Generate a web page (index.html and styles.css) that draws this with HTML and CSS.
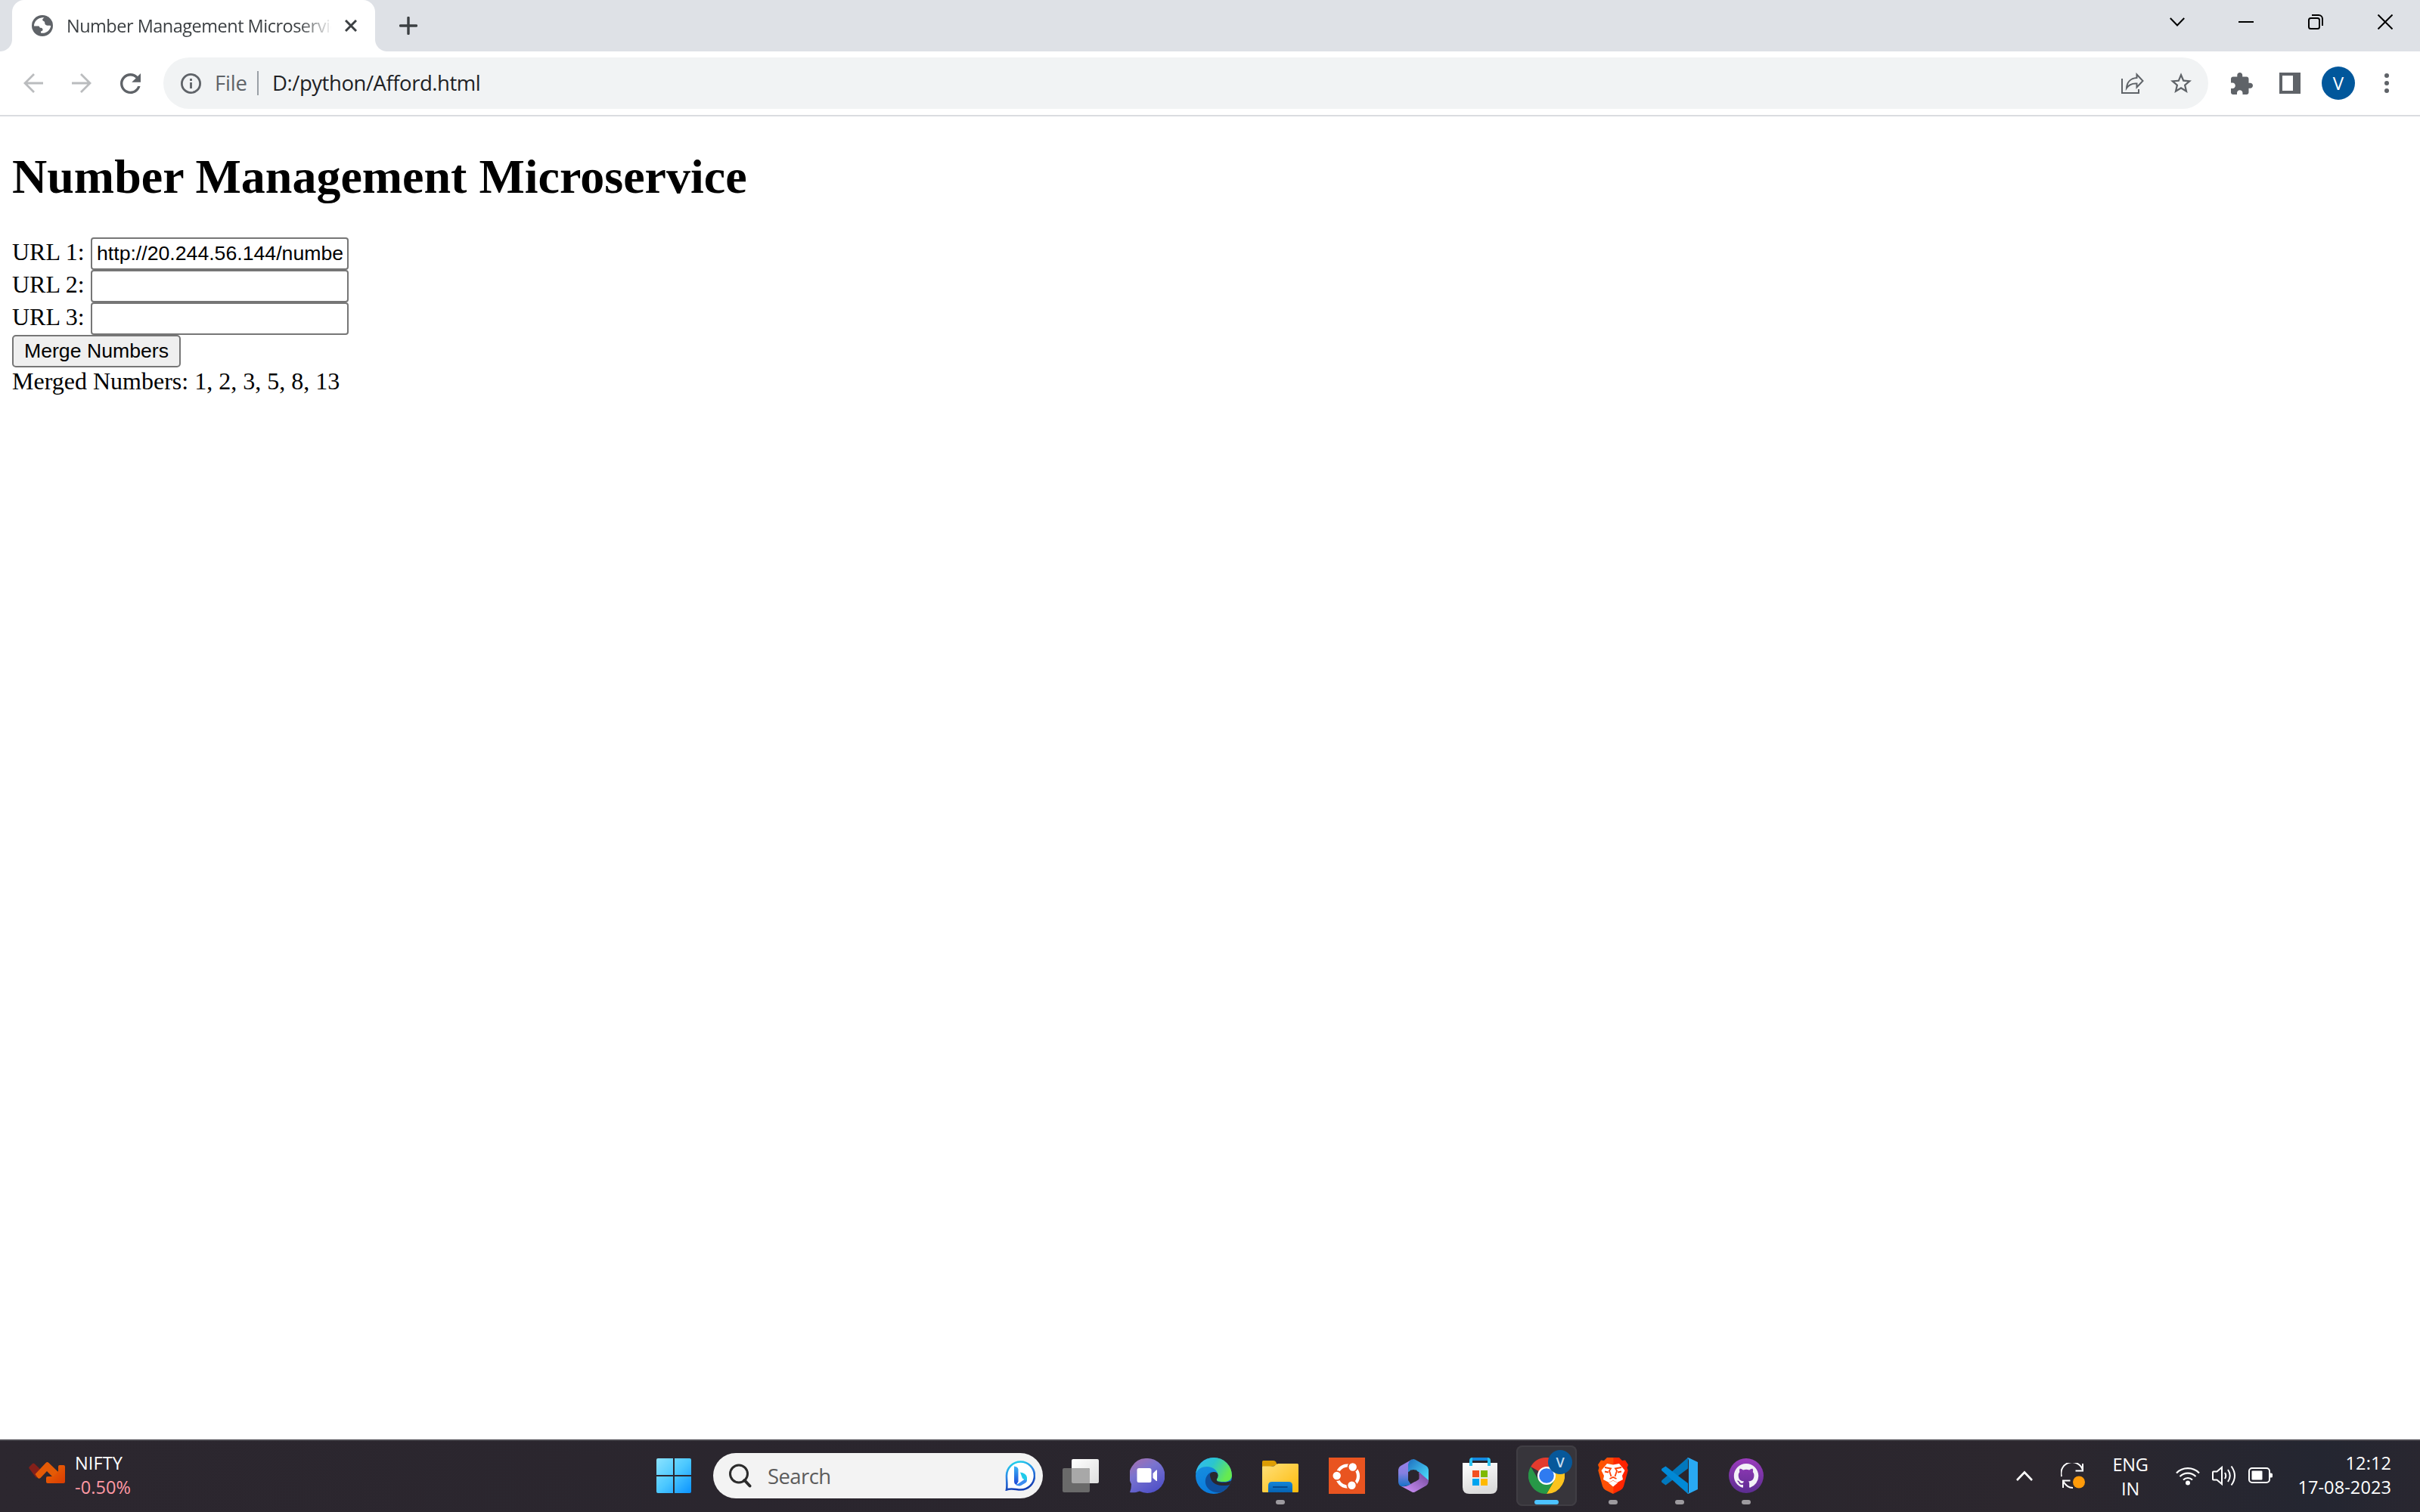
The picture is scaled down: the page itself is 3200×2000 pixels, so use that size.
FILE: index.html
```html
<!DOCTYPE html>
<html lang="en">
<head>
<meta charset="utf-8">
<title>Number Management Microservice</title>
<link rel="stylesheet" href="styles.css">
</head>
<body>
<div class="screen">
  <header class="tabstrip">
    <div class="tab">
      <svg class="favicon" width="28" height="28" viewBox="0 0 28 28"><circle cx="14" cy="14" r="14" fill="#5f6368"/><path d="M3 14.500c0-4.500 2.500-8 6.500-10 1.500-.8 4.500-1.500 7-1.200-1.300.9-2.500 1.700-2.300 3.200.3 1.500 3 1.200 3 3.500 0 2 1 3.500 3.300 3.800 2 .2 2.800-.6 4.700.4-.4 3.800-3.500 8-8 9.200-1.800.5-3.500.6-5.200.2 0-1.400 0-2.200 1.300-2.500 1.400-.4 1.400-1.600 1-2.800-.4-1.500-1.800-1.300-3-1.600-1.600-.4-.8-2.200-2.300-2.200z" fill="#fff"/></svg>
      <span class="tab-title">Number Management Microservice</span>
      <svg class="tab-close" width="16" height="16" viewBox="0 0 16 16"><path d="M1 1l14 14M15 1L1 15" stroke="#3c4043" stroke-width="3"/></svg>
    </div>
    <svg class="new-tab" width="24" height="24" viewBox="0 0 24 24"><path d="M12 1.500v21M1.500 12h21" stroke="#3c4043" stroke-width="3.400" stroke-linecap="round"/></svg>
    <div class="window-controls">
      <span class="win"><svg class="caret" width="20" height="12" viewBox="0 0 20 12"><path d="M.8 1L10 10.500 19.200 1" fill="none" stroke="#000" stroke-width="2"/></svg></span>
      <span class="win"><svg width="20" height="2"><rect width="20" height="2"/></svg></span>
      <span class="win"><svg width="20" height="20" viewBox="0 0 20 20" fill="none" stroke="#000" stroke-width="2"><rect x="1" y="5" width="14" height="14" rx="2.500"/><path d="M5 1h9a5 5 0 0 1 5 5v9"/></svg></span>
      <span class="win"><svg width="20" height="20" viewBox="0 0 20 20"><path d="M.5.500l19 19M19.500.500l-19 19" stroke="#000" stroke-width="2"/></svg></span>
    </div>
  </header>

  <nav class="toolbar">
    <span class="tool"><svg width="26" height="26" viewBox="0 0 26 26" fill="none" stroke="#babcbe" stroke-width="2.800"><path d="M26 13H2M14 1L2 13l12 12"/></svg></span>
    <span class="tool"><svg width="26" height="26" viewBox="0 0 26 26" fill="none" stroke="#babcbe" stroke-width="2.800"><path d="M0 13h24M12 1l12 12-12 12"/></svg></span>
    <span class="tool"><svg width="27" height="27" viewBox="4 4 16 16"><path fill="#5f6368" d="M17.650 6.350C16.200 4.900 14.210 4 12 4c-4.420 0-7.990 3.580-7.990 8s3.570 8 7.990 8c3.730 0 6.840-2.550 7.730-6h-2.080c-.82 2.330-3.040 4-5.650 4-3.310 0-6-2.690-6-6s2.690-6 6-6c1.660 0 3.140.69 4.220 1.780L13 11h7V4l-2.350 2.350z"/></svg></span>
    <div class="omnibox">
      <svg width="27" height="27" viewBox="0 0 27 27"><circle cx="13.500" cy="13.500" r="12.100" fill="none" stroke="#5f6368" stroke-width="2.800"/><path d="M12.100 12h2.800v8h-2.800zM12.100 7h2.800v2.900h-2.800z" fill="#5f6368"/></svg>
      <span class="scheme">File</span>
      <span class="rule"></span>
      <span class="url">D:/python/Afford.html</span>
      <span class="tool push"><svg width="30" height="28" viewBox="0 0 30 28" fill="none" stroke="#5f6368" stroke-width="2"><path d="M1 8v19h22v-5"/><path d="M20.500 2.500L28.500 11l-8 8.500v-5C14 14 10 16 7 20.500 7.500 13 12 7.500 20.500 7z"/></svg></span>
      <span class="tool"><svg width="28" height="28" viewBox="2 2 20 19.500"><path fill="#5f6368" d="M22 9.240l-7.190-.62L12 2 9.190 8.630 2 9.240l5.460 4.730L5.820 21 12 17.270 18.180 21l-1.630-7.030L22 9.240zM12 15.400l-3.760 2.270 1-4.280-3.320-2.880 4.380-.38L12 6.100l1.710 4.040 4.380.38-3.320 2.880 1 4.280L12 15.400z"/></svg></span>
    </div>
    <span class="tool after"><svg width="29" height="29" viewBox="2 1 21 21"><path fill="#5f6368" d="M20.500 11H19V7c0-1.100-.9-2-2-2h-4V3.500C13 2.120 11.880 1 10.500 1S8 2.120 8 3.500V5H4c-1.100 0-1.990.9-1.990 2v3.800H3.500c1.490 0 2.700 1.210 2.700 2.700s-1.210 2.700-2.700 2.700H2V20c0 1.100.9 2 2 2h3.800v-1.500c0-1.490 1.210-2.700 2.700-2.700 1.490 0 2.700 1.210 2.700 2.700V22H17c1.100 0 2-.9 2-2v-4h1.500c1.380 0 2.500-1.120 2.500-2.500S21.880 11 20.500 11z"/></svg></span>
    <span class="tool"><svg width="28" height="28"><path fill="#5f6368" fill-rule="evenodd" d="M0 0h28v28H0zM4 4v20h14V4z"/></svg></span>
    <span class="tool"><span class="avatar">V</span></span>
    <span class="tool"><svg width="6" height="26" viewBox="0 0 6 26" fill="#5f6368"><circle cx="3" cy="3" r="3"/><circle cx="3" cy="13" r="3"/><circle cx="3" cy="23" r="3"/></svg></span>
  </nav>

  <main class="page">
    <h1>Number Management Microservice</h1>
    <div class="field"><label for="u1">URL 1:</label><input id="u1" value="http://20.244.56.144/numbe"></div>
    <div class="field"><label for="u2">URL 2:</label><input id="u2"></div>
    <div class="field"><label for="u3">URL 3:</label><input id="u3"></div>
    <button class="merge">Merge Numbers</button>
    <div class="result">Merged Numbers: 1, 2, 3, 5, 8, 13</div>
  </main>

  <footer class="taskbar">
    <div class="widget">
      <svg width="48" height="28" viewBox="0 0 48 28"><defs><linearGradient id="wo" x1="0" x2="1" y2="1"><stop offset="0" stop-color="#ee6a08"/><stop offset="1" stop-color="#d83b01"/></linearGradient></defs><path d="M1 6l4-4q1-1 2.500 0L18 12l-8 9L1 9q-1.500-1.500 0-3z" fill="#84201a"/><path d="M8.500 16L22.500 1q2-2 4 0L40 14l-7 7-9-9-8.500 9q-2 1.500-3.500 0z" fill="#e45a06"/><path d="M39 12V6q0-2 2-2h5q2 0 2 2v20q0 2-2 2H25q-2 0-2-2v-5q0-2 2-2h7z" fill="url(#wo)"/></svg>
      <div class="lines"><span class="nifty">NIFTY</span><span class="loss">-0.50%</span></div>
    </div>

    <svg class="start" width="46" height="46" viewBox="0 0 46 46"><defs><linearGradient id="st" x1="0" x2="1" y2="1"><stop offset="0" stop-color="#8be3ff"/><stop offset=".5" stop-color="#4cc8ff"/><stop offset="1" stop-color="#0a93ff"/></linearGradient></defs><path fill="url(#st)" d="M2 0h20v22H0V2q0-2 2-2zM24 0h20q2 0 2 2v20H24zM0 24h22v22H2q-2 0-2-2zM24 24h22v20q0 2-2 2H24z"/></svg>
    <div class="search">
      <svg width="30" height="32" viewBox="0 0 30 32" fill="none" stroke="#2b2b2b" stroke-width="3"><circle cx="13" cy="13.500" r="11.500"/><path d="M20.500 22l7 7.500" stroke-width="4" stroke-linecap="round"/></svg>
      <span class="search-text">Search</span>
      <svg class="bing" width="40" height="40" viewBox="0 0 40 40"><defs><linearGradient id="b1" x1="0" x2=".3" y2="1"><stop offset="0" stop-color="#1be0ec"/><stop offset=".5" stop-color="#2f86e6"/><stop offset="1" stop-color="#143fb4"/></linearGradient><linearGradient id="b2" x1="0" x2="0" y2="1"><stop offset="0" stop-color="#3bb5f6"/><stop offset="1" stop-color="#1d47d8"/></linearGradient></defs><path d="M2 38.500c1-5 0-12 0-18.500a18.500 18.500 0 1 1 18.500 18.500c-6 0-12-2.500-18.500 0z" fill="#fff" stroke="url(#b1)" stroke-width="2.600"/><path d="M12 7.500l3 .8q2.500 1.200 2.500 3.500v16l-2.500 4.200q-3-1-3-4.500z" fill="url(#b2)"/><path d="M13.500 31.500q2 .3 4-1L29 22.500v3.500q0 2-2 3.500l-6 3.500q-4.500 1.500-7.500-1.500z" fill="#3c8cf0"/><path d="M20 15.500q8 1 9 7v3.500q-2 .5-6-2.500z" fill="#20cbea"/></svg>
    </div>

    <div class="apps">
      <span class="app"><svg width="48" height="48" viewBox="0 0 48 48"><defs><linearGradient id="tv" x1="0" x2="1" y2="1"><stop offset="0" stop-color="#fff"/><stop offset="1" stop-color="#dedede"/></linearGradient></defs><rect x="12" y="2" width="36" height="32" rx="2" fill="url(#tv)"/><rect y="14" width="36" height="32" rx="2" fill="#6a6a6a"/><path d="M12 14h22q2 0 2 2v18H14q-2 0-2-2z" fill="#a8a8a8"/></svg></span>
      <span class="app"><svg width="46" height="46" viewBox="0 0 46 46"><defs><linearGradient id="ch" x1=".1" x2=".7" y2="1"><stop offset="0" stop-color="#a76fae"/><stop offset=".4" stop-color="#7a74cf"/><stop offset="1" stop-color="#4f50c8"/></linearGradient></defs><path d="M23 0a23 23 0 1 1-10 43.500C8 45.500 4 45.500 0 45q2-5 2-11A23 23 0 0 1 23 0z" fill="url(#ch)"/><rect x="9.500" y="13" width="19" height="19" rx="2.500" fill="#fff"/><path d="M30.500 20l4.500-4.500h1v14.500h-1L30.500 26z" fill="#fff"/></svg></span>
      <span class="app"><svg width="48" height="48" viewBox="0 0 48 48"><defs><linearGradient id="e1" x1="0" x2="1" y2=".4"><stop offset="0" stop-color="#35b9f6"/><stop offset=".5" stop-color="#2bc5cf"/><stop offset="1" stop-color="#66ea50"/></linearGradient><linearGradient id="e2" x1="0" x2=".3" y2="1"><stop offset="0" stop-color="#1a94e0"/><stop offset="1" stop-color="#0a7bdc"/></linearGradient><clipPath id="ec"><circle cx="24" cy="24" r="24"/></clipPath></defs><g clip-path="url(#ec)"><path d="M0 0h48v48H0z" fill="url(#e2)"/><path d="M21 19C8 25 11 44 27 46l8 1 13-11-20-8z" fill="#0f4f9c"/><path d="M19 24C18 18 29 17 30 23l-2 8c4 3 12 3 20-1v5c-4 2-8 2-13 2-9 0-15-5-16-13z" fill="#2a262e"/><path d="M0 20V0h48v24c0 4-4 8-9 8-4 0-10 0-11-2-.7-2 2-3 1.800-6C29.500 17 23 12 15 12 8 12 3 15 0 21z" fill="url(#e1)"/></g></svg></span>
      <span class="app on"><svg width="48" height="48" viewBox="0 0 48 48"><defs><linearGradient id="fo" x1="0" x2="1" y2="1"><stop offset="0" stop-color="#ffe07a"/><stop offset="1" stop-color="#fdbb0b"/></linearGradient><linearGradient id="fb" x1="0" x2="0" y2="1"><stop offset="0" stop-color="#1486d8"/><stop offset="1" stop-color="#0563b4"/></linearGradient></defs><path d="M0 14V5.500q0-1.500 1.500-1.500H15q2 0 3 1.500L20 10z" fill="#dd9d04"/><path d="M0 12.500q0-1 1.500-1H14q2 0 3.500-1.500 2-2 4-2h25q1.500 0 1.500 1.500v35q0 1.500-1.500 1.500h-45Q0 46 0 44.500z" fill="url(#fo)"/><path d="M8 46V37q0-5 5-5h22q5 0 5 5v9z" fill="url(#fb)"/><path d="M14 39h19.500" stroke="#064a8c" stroke-width="2"/></svg></span>
      <span class="app"><svg width="48" height="48" viewBox="0 0 48 48"><path d="M0 0h48v48H0z" fill="#e95420"/><circle cx="25" cy="24.500" r="14" fill="none" stroke="#fff" stroke-width="4.200"/><g fill="#fff" stroke="#e95420" stroke-width="1.800"><circle cx="31.700" cy="12.500" r="6.100"/><circle cx="10.700" cy="24" r="6.100"/><circle cx="30.500" cy="36.700" r="6.100"/></g></svg></span>
      <span class="app"><svg width="40" height="44" viewBox="0 0 40 44"><defs><linearGradient id="m1" x1="0" x2="0" y2="1"><stop offset="0" stop-color="#9d7ee8"/><stop offset=".5" stop-color="#8580e0"/><stop offset="1" stop-color="#1472c8"/></linearGradient><linearGradient id="m2" x1="0" x2="1" y2="1"><stop offset="0" stop-color="#1f6fc0"/><stop offset="1" stop-color="#4ee4ff"/></linearGradient><linearGradient id="m3" x1="0" x2="1" y1="1" y2="0"><stop offset="0" stop-color="#d597ff"/><stop offset="1" stop-color="#6d4596"/></linearGradient></defs><path d="M18 .5L3 9q-3 2-3 5v16q0 5 5 6.500L17 34l-4-6V8z" fill="url(#m1)"/><path d="M13 17V7q1-6 7-7l2 .5L37 9q3 2 3 5v16L27 17l-7-3z" fill="url(#m2)"/><path d="M4 36l14 7.500q2 1 4 0L37 35q3-2 3-7L27 17v10l-9 5q-6 5-14 4z" fill="url(#m3)"/><path d="M20 14.500h4l3.500 6V26L23 29.500h-6L13 24v-4l3-5.500z" fill="#2a262e"/></svg></span>
      <span class="app"><svg width="46" height="48" viewBox="0 0 46 48"><defs><linearGradient id="ms" x1="0" x2=".3" y2="1"><stop offset="0" stop-color="#fff"/><stop offset="1" stop-color="#dcdcdc"/></linearGradient></defs><path d="M0 7h46v32q0 9-9 9H9q-9 0-9-9z" fill="url(#ms)"/><path d="M11 11V4q0-2 2-2h20q2 0 2 2v7" fill="none" stroke="#2bc3f3" stroke-width="4"/><path d="M13 2h20" stroke="#1389e0" stroke-width="4"/><path fill="#f25022" d="M13 17h9v9h-9z"/><path fill="#7fba00" d="M24 17h9v9h-9z"/><path fill="#00a4ef" d="M13 28h9v9h-9z"/><path fill="#ffb900" d="M24 28h9v9h-9z"/></svg></span>
      <span class="app active"><svg width="48" height="48" viewBox="0 0 48 48"><path d="M24 24L3.200 12a24 24 0 0 1 41.600 0z" fill="#e33b2e"/><path d="M24 12h20.800A24 24 0 0 1 24 48l10.400-18z" fill="#fcc31e"/><path d="M3.200 12A24 24 0 0 0 24 48l10.400-18H13.600z" fill="#279847"/><circle cx="24" cy="24" r="12" fill="#fff"/><circle cx="24" cy="24" r="9.800" fill="#2f7bf0"/></svg><span class="profile">V</span></span>
      <span class="app on"><svg width="40" height="48" viewBox="0 0 40 48"><defs><linearGradient id="br" x1="0" x2="1"><stop offset="0" stop-color="#ff5500"/><stop offset=".5" stop-color="#ff4a0a"/><stop offset=".52" stop-color="#ff2a00"/><stop offset="1" stop-color="#ff2000"/></linearGradient></defs><path d="M12 0h16l4 4 4-.5 4 6-1.500 4 1.200 3.500L34 38q-1 3-4 5l-10 5-10-5q-3-2-4-5L.3 17l1.200-3.500L0 9.500l4-6L8 4z" fill="url(#br)"/><path d="M12 8l8 1.500L28 8l7.500 9L32 24l1 5-7.500 4-5.500-3-5.500 3L7 29l1-5-3.500-7z" fill="#fff"/><path d="M14 33.500l6-3 6 3-6 5z" fill="#fff"/><path d="M9 13l8 1.500-2 3 2.500 7.500M31 13l-8 1.500 2 3-2.500 7.500M9 18.500l5 1M31 18.500l-5 1M15.500 28l4.500-2 4.500 2" fill="none" stroke="#ff4205" stroke-width="1.800"/></svg></span>
      <span class="app on"><svg width="48" height="48" viewBox="0 0 48 48"><path d="M35 0v14.500L5.500 36.500.6 33q-1.200-1.500 0-3z" fill="#0278bd"/><path d="M5.500 11.500L35 34v14L.6 17.500q-1.200-1.500 0-3z" fill="#0189d6"/><path d="M34 .4Q35.500 0 36.500.400L48 6v36l-11.500 5.600q-1.500.4-2.500-.2 2 0 2-3V4q0-3-2-3.600z" fill="#29a9f3"/></svg></span>
      <span class="app on"><svg width="46" height="46" viewBox="0 0 46 46"><defs><linearGradient id="gh" x1="0" x2="0" y2="1"><stop offset="0" stop-color="#9b3bbd"/><stop offset="1" stop-color="#5c2d91"/></linearGradient></defs><circle cx="23" cy="23" r="23" fill="url(#gh)"/><path transform="translate(6.800 7) scale(2.030)" fill="#f3f1f7" d="M8 0C3.580 0 0 3.580 0 8c0 3.540 2.290 6.530 5.470 7.590.4.070.55-.17.55-.38 0-.19-.01-.82-.01-1.490-2.010.37-2.530-.49-2.690-.94-.09-.23-.48-.94-.82-1.130-.28-.15-.68-.52-.01-.53.63-.01 1.080.58 1.230.82.72 1.210 1.870.87 2.330.66.07-.52.28-.87.51-1.070-1.780-.2-3.640-.89-3.640-3.950 0-.87.31-1.590.82-2.150-.08-.2-.36-1.020.08-2.120 0 0 .67-.21 2.200.82.64-.18 1.320-.27 2-.27s1.360.09 2 .27c1.530-1.040 2.200-.82 2.200-.82.44 1.100.16 1.920.08 2.120.51.56.82 1.270.82 2.150 0 3.070-1.870 3.750-3.650 3.950.29.25.54.73.54 1.480 0 1.070-.01 1.930-.01 2.200 0 .21.15.46.55.38A8.010 8.010 0 0 0 16 8c0-4.420-3.580-8-8-8z"/></svg></span>
    </div>

    <div class="tray">
      <svg width="22" height="14" viewBox="0 0 22 14"><path d="M1 13L11 2.500 21 13" fill="none" stroke="#fff" stroke-width="2.600"/></svg>
      <svg class="sync" width="32" height="34" viewBox="0 0 32 34" fill="none" stroke="#fff" stroke-width="2"><path d="M1 18A14.500 14.500 0 0 1 29 9.500M29 1v9.500H19.500M3 33v-9.500h9.500M3 24q5 9 13 9"/><circle cx="24" cy="25.500" r="8" fill="#ff9b0a" stroke="none"/></svg>
      <div class="lang"><span>ENG</span><span>IN</span></div>
      <svg width="32" height="26" viewBox="0 0 32 26" fill="none" stroke="#fff" stroke-width="2.200"><path d="M1 9.500a21 21 0 0 1 30 0M5.500 14a14.800 14.800 0 0 1 21 0M10 18.500a8.500 8.500 0 0 1 12 0"/><circle cx="16" cy="22.500" r="3" fill="#fff" stroke="none"/></svg>
      <svg width="32" height="28" viewBox="0 0 32 28" fill="none" stroke="#fff" stroke-width="2"><path d="M1 9.500q0-1 1-1h4.500L13 3v22l-6.500-5.500H2q-1 0-1-1z"/><path d="M17 10q2.500 4 0 8M21 6q5.500 8 0 16M25.500 1.500q9 12.500 0 25"/></svg>
      <svg width="32" height="22" viewBox="0 0 32 22"><rect x="1" y="1" width="27" height="19" rx="4" fill="none" stroke="#fff" stroke-width="2"/><rect x="4.500" y="4.500" width="14" height="12" rx="1" fill="#fff"/><path d="M28 7.500h2q2 0 2 1.500v3q0 1.500-2 1.500h-2z" fill="#fff"/></svg>
      <div class="clock"><span class="time">12:12</span><span class="date">17-08-2023</span></div>
    </div>
  </footer>
</div>
</body>
</html>
```
FILE: styles.css
```css
* { box-sizing: border-box; }
body { margin: 0; background: #fff; }
svg { display: block; flex: none; }

.screen {
  width: 3200px;
  height: 2000px;
  display: flex;
  flex-direction: column;
  overflow: hidden;
  font-family: "Open Sans", "Noto Sans", sans-serif;
}

/* Tab strip */
.tabstrip { display: flex; height: 68px; flex: none; background: #dee1e6; }
.tab {
  position: relative;
  display: flex;
  align-items: center;
  width: 480px;
  margin-left: 16px;
  padding-left: 26px;
  background: #fff;
  border-radius: 16px 16px 0 0;
}
.tab::before, .tab::after {
  content: "";
  position: absolute;
  bottom: 0;
  width: 16px;
  height: 16px;
}
.tab::before { left: -16px; background: radial-gradient(circle at 0 0, transparent 15.5px, #fff 16.5px); }
.tab::after { right: -16px; background: radial-gradient(circle at 100% 0, transparent 15.5px, #fff 16.5px); }
.tab-title {
  width: 350px;
  margin-left: 18px;
  overflow: hidden;
  white-space: nowrap;
  font-size: 23.5px;
  line-height: 34px;
  letter-spacing: -0.5px;
  color: #3c4043;
  -webkit-mask-image: linear-gradient(90deg, #000 308px, transparent 352px);
  mask-image: linear-gradient(90deg, #000 308px, transparent 352px);
}
.tab-close { margin-left: 18px; }
.new-tab { margin: 22px 0 0 32px; }
.window-controls { display: flex; margin-left: auto; height: 58px; }
.win { display: flex; align-items: center; justify-content: center; width: 92px; }
.caret { margin-left: 2px; }

/* Toolbar */
.toolbar {
  display: flex;
  align-items: center;
  flex: none;
  height: 86px;
  padding-left: 12px;
  border-bottom: 2px solid #dadce0;
}
.tool { display: flex; align-items: center; justify-content: center; width: 64px; flex: none; }
.push { margin-left: auto; }
.after { margin-left: 12px; }
.omnibox {
  display: flex;
  align-items: center;
  width: 2704px;
  height: 68px;
  margin-left: 12px;
  padding: 0 4px 0 23px;
  border-radius: 34px;
  background: #f1f3f4;
  font-size: 27.5px;
  line-height: 40px;
}
.scheme { width: 56px; margin-left: 18px; color: #5f6368; letter-spacing: -0.2px; }
.rule { width: 2px; height: 32px; background: #9aa0a6; }
.url { margin-left: 18px; color: #202124; letter-spacing: -0.45px; }
.avatar {
  width: 44px;
  height: 44px;
  border-radius: 50%;
  background: #01579b;
  color: #fff;
  font-size: 24px;
  line-height: 43px;
  text-align: center;
}

/* Document */
.page {
  flex: 1;
  padding: 43px 16px 0;
  font: 32px/36px "Liberation Serif", serif;
  color: #000;
}
h1 { margin: 0 0 43px; font-size: 64px; line-height: 74px; }
.field { display: flex; height: 43px; }
.field label { width: 104px; line-height: 39px; }
.field input {
  width: 341px;
  height: 43px;
  margin: 0;
  padding: 0 6px;
  border: 2px solid #767676;
  border-radius: 4px;
  background: #fff;
  color: #000;
  font: 26.67px "Liberation Sans", sans-serif;
}
.merge {
  display: block;
  width: 223px;
  height: 43px;
  margin: 0;
  padding: 0;
  border: 2px solid #767676;
  border-radius: 5px;
  background: #efefef;
  color: #000;
  font: 26.67px "Liberation Sans", sans-serif;
}

/* Taskbar */
.taskbar {
  display: flex;
  align-items: center;
  flex: none;
  height: 96px;
  background: linear-gradient(90deg, #2c272f 0%, #29252d 60%, #2c272e 84%, #242631 96%, #292730 100%);
  box-shadow: inset 0 2px #4a484e;
  color: #fff;
  font-size: 23.5px;
  line-height: 32px;
}
.widget { display: flex; width: 868px; padding-left: 38px; align-items: center; }
.widget svg { margin-top: -8px; }
.lines { display: flex; flex-direction: column; margin: -2px 0 0 13px; }
.nifty { letter-spacing: 0.1px; }
.loss { color: #ff99a4; letter-spacing: 0.1px; }
.search {
  display: flex;
  align-items: center;
  width: 436px;
  height: 60px;
  margin-left: 29px;
  padding: 0 10px 0 21px;
  border-radius: 30px;
  background: #f3f3f3;
}
.search-text { margin-left: 21px; padding-top: 1px; font-size: 27.5px; color: #5c5c5c; letter-spacing: -0.6px; }
.bing { margin-left: auto; }
.apps { display: flex; margin-left: 6px; }
.app {
  position: relative;
  display: flex;
  align-items: center;
  justify-content: center;
  width: 80px;
  height: 80px;
  margin: 0 4px;
}
.app.active { background: #37353b; border-radius: 8px; box-shadow: inset 0 0 0 2px #403e44; }
.app.on::after, .app.active::after {
  content: "";
  position: absolute;
  bottom: 2px;
  width: 12px;
  height: 6px;
  border-radius: 3px;
  background: #9d9a9f;
}
.app.active::after { width: 32px; background: #4cc2ff; }
.profile {
  position: absolute;
  top: 6px;
  right: 6px;
  width: 32px;
  height: 32px;
  border-radius: 50%;
  background: #07589a;
  color: #c6dcef;
  font-size: 18px;
  font-weight: 600;
  text-align: center;
}
.tray { display: flex; align-items: center; margin-left: auto; padding-right: 38px; gap: 16px; }
.sync { margin-left: 21px; }
.lang { display: flex; flex-direction: column; width: 64px; margin: 2px 12px 0; text-align: center; letter-spacing: -0.2px; }
.clock { display: flex; flex-direction: column; width: 141px; margin-top: -2px; text-align: right; letter-spacing: 0.1px; }
```
